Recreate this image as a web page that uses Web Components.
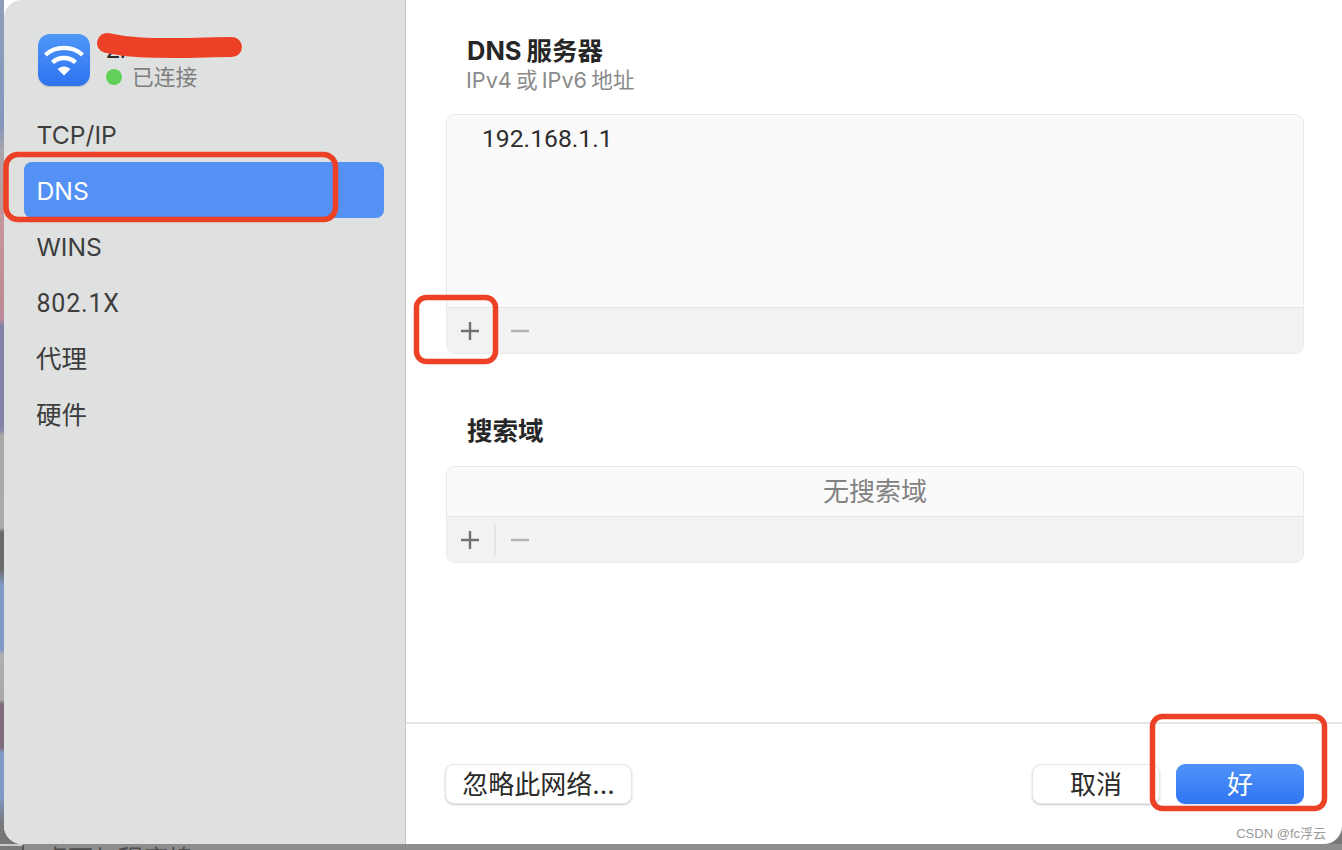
<!DOCTYPE html>
<html lang="zh">
<head>
<meta charset="utf-8">
<title>DNS</title>
<style>
  html, body { margin: 0; height: 100%; overflow: hidden; }
  body {
    width: 1342px;
    height: 850px;
    position: relative;
    font-family: Inter, "Noto Sans CJK SC", sans-serif;
    background: #8f8f8f;
  }
</style>
</head>
<body>
<mac-desktop>
  <net-window>
    <net-sidebar slot="sidebar">
      <net-row>TCP/IP</net-row>
      <net-row active>DNS</net-row>
      <net-row>WINS</net-row>
      <net-row digits>802.1X</net-row>
      <net-row cjk>代理</net-row>
      <net-row cjk>硬件</net-row>
    </net-sidebar>

    <net-section heading="DNS 服务器" note="IPv4 或 IPv6 地址">
      <list-box body-height="192" divided="false">
        <span>192.168.1.1</span>
      </list-box>
    </net-section>

    <net-section heading="搜索域" style="margin-top:61px">
      <list-box body-height="49" empty="无搜索域" divided="true"></list-box>
    </net-section>

    <mac-button slot="left" width="187">忽略此网络...</mac-button>
    <mac-button slot="right" width="128">取消</mac-button>
    <mac-button slot="right" width="128" primary>好</mac-button>
  </net-window>
</mac-desktop>
<red-marks></red-marks>

<script>
class MacDesktop extends HTMLElement {
  constructor() {
    super();
    this.attachShadow({ mode: "open" });
    this.shadowRoot.innerHTML = `
      <style>
        :host {
          display: block;
          height: 850px;
          padding-left: 4px;
          box-sizing: border-box;
          background: linear-gradient(180deg,
            #8f9db8 0, #8396bd 125px, #a9a6ac 150px, #c4979a 222px, #bd8795 320px,
            #8482a8 325px, #8583aa 430px, #a8a8a8 435px, #ababab 528px, #6b6b6b 532px,
            #6b6b6b 569px, #8199c4 585px, #8199c4 650px, #b0b0b0 655px, #a8a8a8 700px,
            #7e6c7c 704px, #7e6c7c 748px, #8199c4 752px, #8199c4 797px, #777 825px);
        }
        .strip {
          display: flex;
          height: 6px;
          margin-left: -4px;
          background: #8d8d8d;
          color: #4e4e4e;
          font-size: 25px;
          overflow: hidden;
          white-space: nowrap;
        }
        .dock {
          flex: none;
          width: 24px;
          box-sizing: border-box;
          background: #7a7a7a;
          border-top: 2px solid #c9c9c9;
          border-right: 2px solid #555;
        }
        .strip span { margin: 1px 0 0 19px; line-height: 28px; }
      </style>
      <slot></slot>
      <div class="strip"><div class="dock"></div><span>桌面与程序坞</span></div>
    `;
  }
}

class NetWindow extends HTMLElement {
  constructor() {
    super();
    this.attachShadow({ mode: "open" });
    this.shadowRoot.innerHTML = `
      <style>
        :host {
          display: grid;
          grid-template-columns: 402px 1fr;
          height: 844px;
          border-radius: 0 0 18px 18px;
          overflow: hidden;
          background: #fff;
        }
        main {
          display: flex;
          flex-direction: column;
          min-width: 0;
        }
        .content {
          flex: 1;
          padding: 35px 38px 0 40px;
        }
        footer {
          height: 122px;
          box-sizing: border-box;
          border-top: 2px solid #e4e4e4;
          padding: 40px 38px 0 39px;
          display: flex;
          justify-content: space-between;
        }
        .group { display: flex; gap: 16px; }
        .tag {
          position: absolute;
          right: 16px;
          bottom: 8px;
          font-family: "Liberation Sans", "Noto Sans CJK SC", sans-serif;
          font-size: 13px;
          line-height: 16px;
          color: #9a9a9a;
        }
      </style>
      <slot name="sidebar"></slot>
      <main>
        <div class="content"><slot></slot></div>
        <footer>
          <div class="group"><slot name="left"></slot></div>
          <div class="group"><slot name="right"></slot></div>
        </footer>
      </main>
      <div class="tag">CSDN @fc浮云</div>
    `;
  }
}

class NetSidebar extends HTMLElement {
  constructor() {
    super();
    this.attachShadow({ mode: "open" });
    this.shadowRoot.innerHTML = `
      <style>
        :host {
          display: block;
          background: #dfe1e0;
          border-right: 1px solid #c6c6c6;
          border-top-left-radius: 18px;
          border-bottom-left-radius: 18px;
          padding: 34px 21px 0 20px;
          box-sizing: border-box;
        }
        header {
          display: flex;
          gap: 16px;
          height: 72px;
          padding-left: 14px;
        }
        .icon {
          width: 52px;
          height: 52px;
          border-radius: 12px;
          background: linear-gradient(180deg, #4f97f8, #2f72ef);
          box-shadow: 0 1px 1px rgba(0,0,0,.18);
          display: block;
        }
        .name {
          font-size: 22px;
          line-height: 26px;
          height: 26px;
          margin-top: 3px;
          color: #2a2a2a;
          font-weight: 500;
        }
        .status {
          display: flex;
          align-items: center;
          gap: 10px;
          font-size: 21.7px;
          line-height: 28px;
          color: #7f7f7f;
        }
        .dot {
          width: 16px;
          height: 16px;
          border-radius: 50%;
          background: #62cf58;
        }
      </style>
      <header>
        <svg class="icon" viewBox="0 0 52 52">
          <g fill="none" stroke="#fff" stroke-width="4.4">
            <path d="M7.5 21C17 11.5 35 11.5 44.5 21"/>
            <path d="M14.5 28.5C21 22.5 31 22.5 37.5 28.5"/>
          </g>
          <path d="M19.5 35C23.5 31.5 28.5 31.5 32.5 35L26 41.5Z" fill="#fff"/>
        </svg>
        <div>
          <div class="name">Zi</div>
          <div class="status"><span class="dot"></span>已连接</div>
        </div>
      </header>
      <slot></slot>
    `;
  }
}

class NetRow extends HTMLElement {
  constructor() {
    super();
    this.attachShadow({ mode: "open" });
    this.shadowRoot.innerHTML = `
      <style>
        :host {
          display: flex;
          align-items: center;
          height: 56px;
          box-sizing: border-box;
          padding: 2px 0 0 12.5px;
          border-radius: 8px;
          font-size: 24.7px;
          color: #3d3d3d;
        }
        :host([digits]) {
          font-family: Roboto, sans-serif;
          font-size: 25px;
          letter-spacing: .8px;
        }
        :host([cjk]) {
          font-size: 25.5px;
          padding: 0 0 4px 12px;
        }
        :host([active]) {
          background: #5491f5;
          color: #fff;
        }
      </style>
      <slot></slot>
    `;
  }
}

class NetSection extends HTMLElement {
  constructor() {
    super();
    this.attachShadow({ mode: "open" });
  }

  connectedCallback() {
    const note = this.getAttribute("note");
    this.shadowRoot.innerHTML = `
      <style>
        :host { display: block; }
        h2 {
          margin: 0 0 0 21px;
          font-size: 25.5px;
          line-height: 32px;
          font-weight: 700;
          word-spacing: -1px;
          color: #262626;
        }
        p {
          margin: 0 0 0 20px;
          font-size: 21.7px;
          line-height: 26px;
          word-spacing: -2px;
          color: #8a8a8a;
        }
        .box { margin-top: ${note ? 21 : 19}px; }
      </style>
      <h2>${this.getAttribute("heading")}</h2>
      ${note ? `<p>${note}</p>` : ""}
      <div class="box"><slot></slot></div>
    `;
  }
}

class ListBox extends HTMLElement {
  constructor() {
    super();
    this.attachShadow({ mode: "open" });
  }

  connectedCallback() {
    const empty = this.getAttribute("empty");
    const bodyHeight = this.getAttribute("body-height");
    const divided = this.getAttribute("divided") === "true";
    this.shadowRoot.innerHTML = `
      <style>
        :host {
          display: block;
          border: 1px solid #e9e9e9;
          border-radius: 9px;
          overflow: hidden;
          background: #fafafa;
          font-size: 25px;
          color: #2e2e2e;
        }
        .body {
          height: ${bodyHeight}px;
          box-sizing: border-box;
          padding: 9px 0 0 35px;
          font-family: Roboto, sans-serif;
          font-size: 24.7px;
          line-height: 30px;
        }
        .empty {
          padding: 0;
          text-align: center;
          font-family: Inter, "Noto Sans CJK SC", sans-serif;
          font-size: 26px;
          color: #828282;
          line-height: 49px;
        }
        .bar {
          height: 46px;
          box-sizing: border-box;
          border-top: 1px solid #e4e4e4;
          background: #f2f2f2;
          display: flex;
          align-items: center;
          padding-left: 13px;
        }
        svg { display: block; width: 20px; height: 20px; }
        .sep {
          width: 2px;
          height: 32px;
          margin: 0 14px 0 14px;
          background: ${divided ? "#e4e4e4" : "transparent"};
        }
      </style>
      <div class="body ${empty ? "empty" : ""}">${empty || "<slot></slot>"}</div>
      <div class="bar">
        <svg viewBox="0 0 20 20"><path d="M10 1v18M1 10h18" stroke="#707070" stroke-width="2.4"/></svg>
        <span class="sep"></span>
        <svg viewBox="0 0 20 20"><path d="M1 10h18" stroke="#b2b2b2" stroke-width="2.4"/></svg>
      </div>
    `;
  }
}

class MacButton extends HTMLElement {
  constructor() {
    super();
    this.attachShadow({ mode: "open" });
  }

  connectedCallback() {
    this.shadowRoot.innerHTML = `
      <style>
        :host {
          display: flex;
          align-items: center;
          justify-content: center;
          width: ${this.getAttribute("width")}px;
          height: 40px;
          box-sizing: border-box;
          padding-bottom: 3px;
          border-radius: 9px;
          background: #fff;
          border: 1px solid #e6e6e6;
          box-shadow: 0 1px 2px rgba(0,0,0,.22);
          font-size: 26px;
          color: #2a2a2a;
        }
        :host([primary]) {
          border: 0;
          background: linear-gradient(180deg, #4f93f8, #3075f3);
          box-shadow: 0 1px 1px rgba(0,0,0,.12);
          color: #fff;
        }
      </style>
      <slot></slot>
    `;
  }
}

// hand drawn annotations lying over the screenshot
class RedMarks extends HTMLElement {
  constructor() {
    super();
    this.attachShadow({ mode: "open" });
    this.shadowRoot.innerHTML = `
      <style>
        :host { position: absolute; inset: 0; display: block; pointer-events: none; }
        svg { display: block; }
      </style>
      <svg width="1342" height="850" fill="none" stroke="#ec4126" stroke-linejoin="round" stroke-linecap="round">
        <path d="M107 43C130 48 150 48 175 48C195 48 215 47 232 47" stroke-width="20"/>
        <rect x="6" y="154.5" width="329.5" height="65" rx="12" stroke-width="5.5"/>
        <rect x="416.5" y="297.5" width="79" height="64" rx="10" stroke-width="5.5"/>
        <rect x="1152.5" y="716.5" width="172" height="92" rx="10" stroke-width="5.5"/>
      </svg>
    `;
  }
}

customElements.define("mac-desktop", MacDesktop);
customElements.define("net-window", NetWindow);
customElements.define("net-sidebar", NetSidebar);
customElements.define("net-row", NetRow);
customElements.define("net-section", NetSection);
customElements.define("list-box", ListBox);
customElements.define("mac-button", MacButton);
customElements.define("red-marks", RedMarks);
</script>
</body>
</html>
